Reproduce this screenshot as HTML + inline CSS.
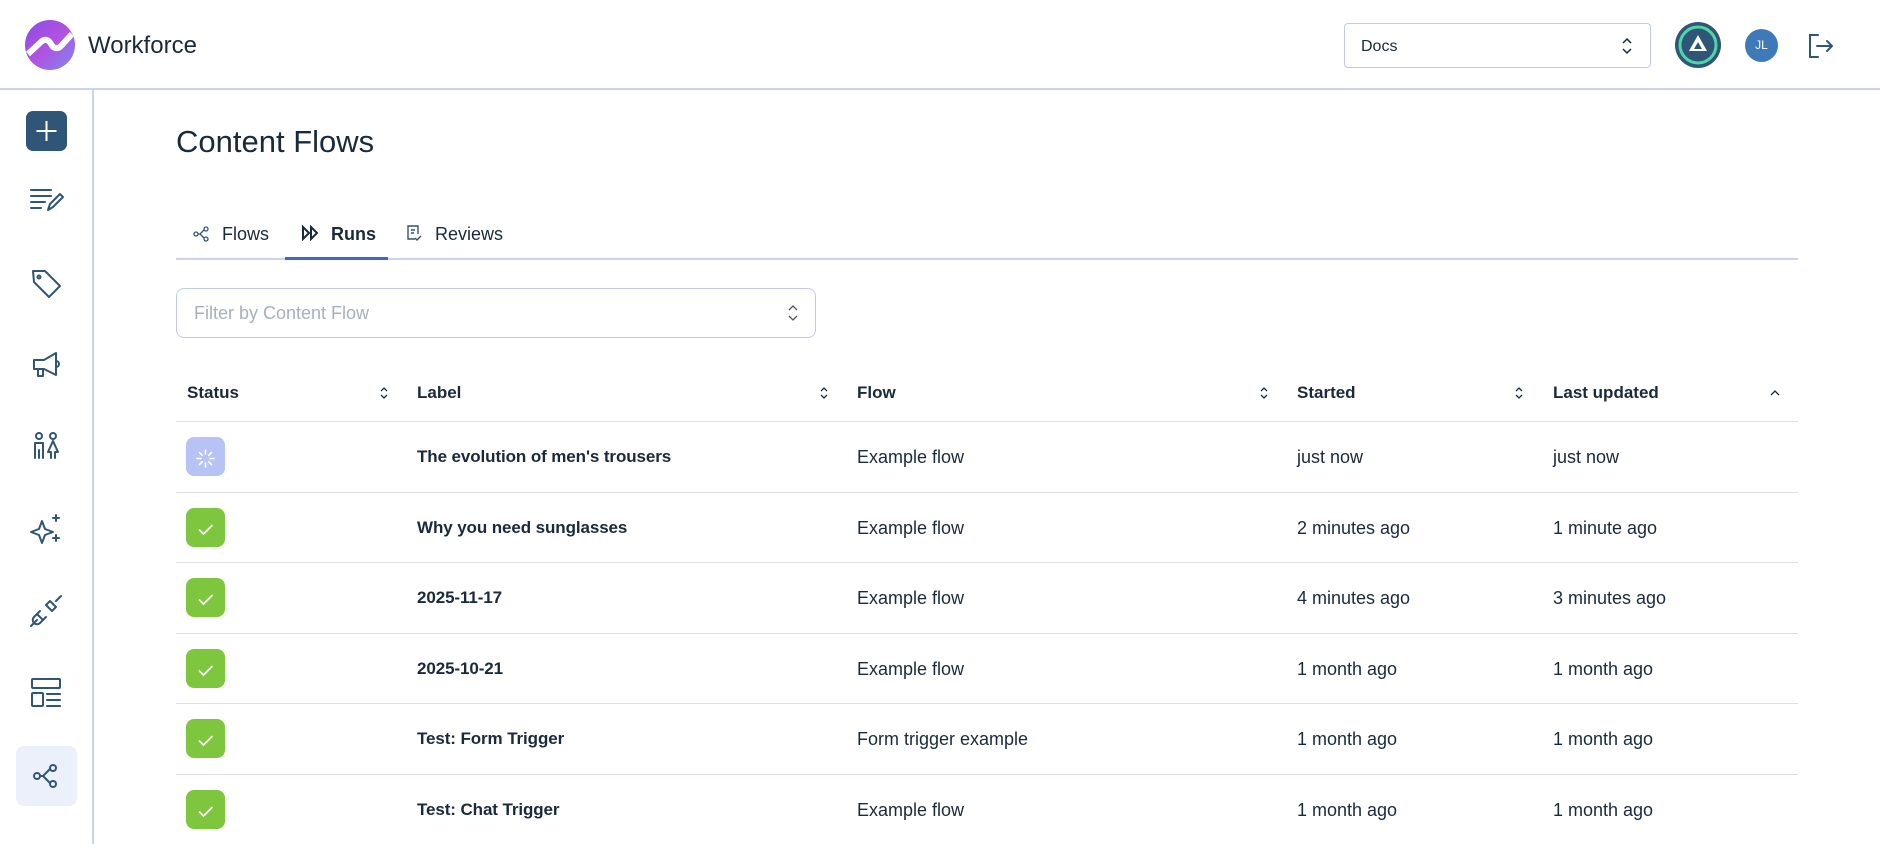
<!DOCTYPE html>
<html><head><meta charset="utf-8"><style>
*{box-sizing:border-box;margin:0;padding:0}
body{width:1880px;height:844px;overflow:hidden;background:#fff;font-family:"Liberation Sans",sans-serif;color:#1a2a3c;position:relative}
.abs{position:absolute}
.hdr{left:0;top:0;width:1880px;height:90px;border-bottom:2px solid #c9d2ee}
.side{left:92px;top:90px;width:2px;height:754px;background:#c9d2ee}
.ico{position:absolute;left:26px;width:40px;height:40px}
.ico svg{width:40px;height:40px;fill:none;stroke:#2f5577;stroke-width:2;stroke-linecap:round;stroke-linejoin:round}
.th{position:absolute;top:383px;font-size:17px;font-weight:bold;color:#1a2a3c}
.sort{position:absolute;top:384px;width:12px;height:18px}
.row{position:absolute;left:176px;width:1622px;height:71px;border-top:1.5px solid #dcdfe6}
.row div{position:absolute;top:0;line-height:70px;font-size:18px}
.row div.b{font-weight:bold;font-size:17px;letter-spacing:-0.1px}
.st{left:10px;top:15px!important;width:39px;height:39px;border-radius:8px;background:#7dc63e}
</style></head><body>
<div class="abs hdr"></div>
<svg class="abs" style="left:25px;top:20px" width="50" height="50" viewBox="0 0 50 50"><defs><linearGradient id="g" x1="0" y1="0" x2="1" y2="1"><stop offset="0" stop-color="#8b4be8"/><stop offset=".5" stop-color="#b052e0"/><stop offset="1" stop-color="#7b8bf0"/></linearGradient></defs><circle cx="25" cy="25" r="25" fill="url(#g)"/><path d="M3 34 L16 22 C20 18,24 20,26 24 C28 28,32 30,36 26 L47 14" stroke="#fff" stroke-width="6" fill="none"/></svg>
<div class="abs" style="left:88px;top:32px;font-size:24px;color:#1a2a3c">Workforce</div>
<div class="abs" style="left:1344px;top:23px;width:307px;height:45px;border:1.5px solid #c2cbec;border-radius:4px;font-size:16px;line-height:45px;padding-left:16px">Docs</div>
<svg class="abs" style="left:1621px;top:37px" width="12" height="18" viewBox="0 0 12 18" fill="none" stroke="#1a2a3c" stroke-width="1.5"><path d="M2 6l4-4 4 4M2 12l4 4 4-4"/></svg>
<svg class="abs" style="left:1675px;top:22px" width="46" height="46" viewBox="0 0 46 46"><circle cx="23" cy="23" r="23" fill="#2f5577"/><circle cx="23" cy="23" r="18" fill="none" stroke="#4fd6a6" stroke-width="3"/><path d="M23 13l9 16H14z" fill="#fff"/><path d="M23 20l-4 7h8z" fill="#2f5577"/></svg>
<div class="abs" style="left:1745px;top:29px;width:33px;height:33px;border-radius:50%;background:#3f7ab8;color:#fff;font-size:12px;text-align:center;line-height:33px">JL</div>
<svg class="abs" style="left:1806px;top:32px" width="28" height="28" viewBox="0 0 28 28" fill="none" stroke="#2f5577" stroke-width="2" stroke-linecap="round"><path d="M12 3H4v22h8M11 14h15M21 9l5 5-5 5"/></svg>
<div class="abs side"></div>
<div class="abs" style="left:26px;top:111px;width:41px;height:40px;border-radius:7px;background:#2f5577"></div>
<svg class="abs" style="left:26px;top:111px" width="41" height="40" fill="none" stroke="#fff" stroke-width="2"><path d="M20.5 10v20M10.5 20h20"/></svg>
<div class="ico" style="top:180px"><svg viewBox="0 0 40 40"><path d="M5 10h20M5 16h20M5 22h14M5 28h10M22 30l2-6 10-10 3 3-10 10z"/></svg></div>
<div class="ico" style="top:263px"><svg viewBox="0 0 40 40"><path d="M7 8h12l15 15-11 11L8 19z"/><circle cx="13" cy="14" r="1.5"/></svg></div>
<div class="ico" style="top:345px"><svg viewBox="0 0 40 40"><path d="M8 15h10l12-7v22l-12-6H8zM12 24v7h5v-7M30 16a3 3 0 010 6"/></svg></div>
<div class="ico" style="top:427px"><svg viewBox="0 0 40 40"><circle cx="13" cy="9" r="3"/><circle cx="27" cy="9" r="3"/><path d="M9 31V16h8v15M13 23v8M27 14l-5 11h3v6M27 14l5 11h-3v6"/></svg></div>
<div class="ico" style="top:509px"><svg viewBox="0 0 40 40"><path d="M16 12l3 8 8 3-8 3-3 8-3-8-8-3 8-3z"/><path d="M30 6v6M27 9h6M30 26v6M27 29h6"/></svg></div>
<div class="ico" style="top:591px"><svg viewBox="0 0 40 40"><path d="M5 35l6-6M11 23l6 6-3 3a4 4 0 01-6-6zM14 20l-3 3M20 26l-3 3M20 14l6 6 4-4-6-6zM30 10l5-5"/></svg></div>
<div class="ico" style="top:673px"><svg viewBox="0 0 40 40"><rect x="6" y="6" width="28" height="9" rx="1"/><rect x="6" y="20" width="11" height="13" rx="1"/><path d="M21 21h13M21 27h13M21 33h13"/></svg></div>
<div class="abs" style="left:16px;top:746px;width:61px;height:60px;border-radius:8px;background:#ebf0fa"></div>
<div class="ico" style="top:756px"><svg viewBox="0 0 40 40"><circle cx="11" cy="20" r="3"/><circle cx="27" cy="12" r="3"/><circle cx="27" cy="28" r="3"/><path d="M14 20h3l7-7M17 20l7 7"/></svg></div>
<div class="abs" style="left:176px;top:124px;font-size:31px;color:#1a2a3c">Content Flows</div>
<div class="abs" style="left:176px;top:258px;width:1622px;height:2px;background:#c9d2ee"></div>
<div class="abs" style="left:285px;top:257px;width:103px;height:3px;background:#3c6bc0"></div>
<svg class="abs" style="left:193px;top:226px" width="18" height="16" fill="none" stroke="#2f5577" stroke-width="1.3"><circle cx="3" cy="8" r="2"/><circle cx="13" cy="3" r="2"/><circle cx="13" cy="13" r="2"/><path d="M5 8h2l4-4M7 8l4 4"/></svg>
<div class="abs" style="left:222px;top:224px;font-size:18px">Flows</div>
<svg class="abs" style="left:301px;top:225px" width="18" height="16" fill="none" stroke="#1a2a3c" stroke-width="2"><path d="M2 2l6 6-6 6zM10 2l6 6-6 6z"/></svg>
<div class="abs" style="left:331px;top:224px;font-size:18px;font-weight:bold">Runs</div>
<svg class="abs" style="left:406px;top:224px" width="16" height="18" fill="none" stroke="#2f5577" stroke-width="1.4"><path d="M9 15H2V2h10v8M5 6h4M5 9h3M9 14l2 2 4-4"/></svg>
<div class="abs" style="left:435px;top:224px;font-size:18px">Reviews</div>
<div class="abs" style="left:176px;top:288px;width:640px;height:50px;border:1.5px solid #c2cbec;border-radius:8px;font-size:18px;line-height:49px;padding-left:17px;color:#a8b0bd">Filter by Content Flow</div>
<svg class="abs" style="left:787px;top:304px" width="12" height="18" fill="none" stroke="#555" stroke-width="1.3"><path d="M2 6l4-4 4 4M2 12l4 4 4-4"/></svg>
<div class="th" style="left:187px">Status</div>
<div class="th" style="left:417px">Label</div>
<div class="th" style="left:857px">Flow</div>
<div class="th" style="left:1297px">Started</div>
<div class="th" style="left:1553px">Last updated</div>
<svg class="sort" style="left:378px" viewBox="0 0 12 18" fill="none" stroke="#1a2a3c" stroke-width="1.3"><path d="M3 7l3-3 3 3M3 11l3 3 3-3"/></svg>
<svg class="sort" style="left:818px" viewBox="0 0 12 18" fill="none" stroke="#1a2a3c" stroke-width="1.3"><path d="M3 7l3-3 3 3M3 11l3 3 3-3"/></svg>
<svg class="sort" style="left:1258px" viewBox="0 0 12 18" fill="none" stroke="#1a2a3c" stroke-width="1.3"><path d="M3 7l3-3 3 3M3 11l3 3 3-3"/></svg>
<svg class="sort" style="left:1513px" viewBox="0 0 12 18" fill="none" stroke="#1a2a3c" stroke-width="1.3"><path d="M3 7l3-3 3 3M3 11l3 3 3-3"/></svg>
<svg class="sort" style="left:1769px" viewBox="0 0 12 18" fill="none" stroke="#1a2a3c" stroke-width="1.3"><path d="M2 11l4-4 4 4"/></svg>

<div class="row" style="top:421px"><div class="st" style="background:#b6c3f4"><svg width="39" height="39" fill="none" stroke="#fff" stroke-width="1.6" stroke-linecap="round"><path d="M19.5 11v4M19.5 24v4M11 19.5h4M24 19.5h4M13.5 13.5l2.8 2.8M22.7 22.7l2.8 2.8M13.5 25.5l2.8-2.8M22.7 16.3l2.8-2.8"/></svg></div><div class="b" style="left:241px">The evolution of men's trousers</div><div style="left:681px">Example flow</div><div style="left:1121px">just now</div><div style="left:1377px">just now</div></div>
<div class="row" style="top:492px"><div class="st"><svg width="39" height="39" fill="none" stroke="#fff" stroke-width="1.8"><path d="M13 19.5l4.5 4.5 9-9"/></svg></div><div class="b" style="left:241px">Why you need sunglasses</div><div style="left:681px">Example flow</div><div style="left:1121px">2 minutes ago</div><div style="left:1377px">1 minute ago</div></div>
<div class="row" style="top:562px"><div class="st"><svg width="39" height="39" fill="none" stroke="#fff" stroke-width="1.8"><path d="M13 19.5l4.5 4.5 9-9"/></svg></div><div class="b" style="left:241px">2025-11-17</div><div style="left:681px">Example flow</div><div style="left:1121px">4 minutes ago</div><div style="left:1377px">3 minutes ago</div></div>
<div class="row" style="top:633px"><div class="st"><svg width="39" height="39" fill="none" stroke="#fff" stroke-width="1.8"><path d="M13 19.5l4.5 4.5 9-9"/></svg></div><div class="b" style="left:241px">2025-10-21</div><div style="left:681px">Example flow</div><div style="left:1121px">1 month ago</div><div style="left:1377px">1 month ago</div></div>
<div class="row" style="top:703px"><div class="st"><svg width="39" height="39" fill="none" stroke="#fff" stroke-width="1.8"><path d="M13 19.5l4.5 4.5 9-9"/></svg></div><div class="b" style="left:241px">Test: Form Trigger</div><div style="left:681px">Form trigger example</div><div style="left:1121px">1 month ago</div><div style="left:1377px">1 month ago</div></div>
<div class="row" style="top:774px"><div class="st"><svg width="39" height="39" fill="none" stroke="#fff" stroke-width="1.8"><path d="M13 19.5l4.5 4.5 9-9"/></svg></div><div class="b" style="left:241px">Test: Chat Trigger</div><div style="left:681px">Example flow</div><div style="left:1121px">1 month ago</div><div style="left:1377px">1 month ago</div></div>
</body></html>
